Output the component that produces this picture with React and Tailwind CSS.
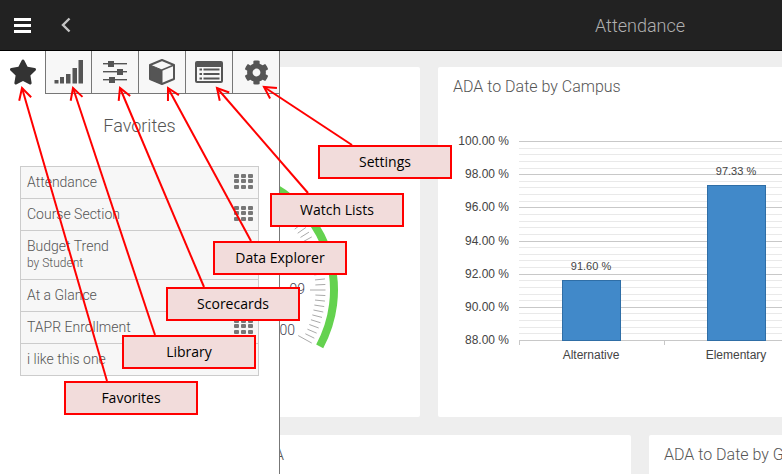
import React from "react";
import { FaStar, FaCog } from "react-icons/fa";

const favorites = [
  { name: "Attendance" },
  { name: "Course Section" },
  { name: "Budget Trend", sub: "by Student" },
  { name: "At a Glance" },
  { name: "TAPR Enrollment" },
  { name: "i like this one" },
];

const callouts = [
  { label: "Settings", className: "left-[318px] top-[145px]", from: [352, 145], to: [264, 87] },
  { label: "Watch Lists", className: "left-[270px] top-[193px]", from: [308, 193], to: [217, 88] },
  { label: "Data Explorer", className: "left-[213px] top-[241px]", from: [251, 241], to: [168, 88] },
  { label: "Scorecards", className: "left-[166px] top-[287px]", from: [204, 287], to: [120, 88] },
  { label: "Library", className: "left-[122px] top-[335px]", from: [155, 335], to: [73, 88] },
  { label: "Favorites", className: "left-[64px] top-[381px]", from: [107, 381], to: [22, 88] },
];

const GridIcon = () => (
  <div className="grid grid-cols-3 gap-[1.5px] w-[19px] h-[15px] mb-[3px] shrink-0">
    {Array.from({ length: 9 }).map((_, i) => (
      <div key={i} className="bg-[#777] rounded-[1px]" />
    ))}
  </div>
);

const BarsIcon = () => (
  <svg width="30" height="25" viewBox="54 60 30 25" fill="#555">
    <rect x="54.5" y="80" width="4" height="3.5" />
    <rect x="60" y="77" width="4" height="6.5" />
    <rect x="66" y="74" width="4.5" height="9.5" />
    <rect x="72.5" y="68" width="4.5" height="15.5" />
    <rect x="78.5" y="60" width="4.5" height="23.5" />
  </svg>
);

const SlidersIcon = () => (
  <svg width="26" height="24" viewBox="102 61 26 24" fill="#555">
    <rect x="103" y="64" width="24" height="1.4" />
    <rect x="103" y="72" width="24" height="1.4" />
    <rect x="103" y="80" width="24" height="1.4" />
    <rect x="108" y="62" width="6" height="6" />
    <rect x="117" y="70" width="6" height="6" />
    <rect x="109" y="78" width="6" height="6" />
  </svg>
);

const CubeIcon = () => (
  <svg width="28" height="28" viewBox="147 59 28 28">
    <path d="M161 61 L173 66 L173 80 L161 85 L149 80 L149 66 Z" fill="#f7f7f7" stroke="#555" strokeWidth="2" strokeLinejoin="round" />
    <path d="M149 66 L161 71 L161 85 L149 80 Z" fill="#555" stroke="#555" strokeWidth="1" />
    <path d="M161 71 L173 66" stroke="#555" strokeWidth="1.5" />
  </svg>
);

const ListIcon = () => (
  <svg width="28" height="23" viewBox="195 60 28 23">
    <rect x="195" y="60" width="28" height="22" rx="2" fill="#555" />
    <rect x="197" y="66" width="24" height="14" fill="#f7f7f7" />
    <g fill="#555">
      <rect x="199.5" y="67.5" width="2.5" height="2" />
      <rect x="203.5" y="67.5" width="16" height="2" />
      <rect x="199.5" y="72" width="2.5" height="2" />
      <rect x="203.5" y="72" width="16" height="2" />
      <rect x="199.5" y="76.5" width="2.5" height="2" />
      <rect x="203.5" y="76.5" width="16" height="2" />
    </g>
  </svg>
);

const Gauge = () => {
  const cx = 216;
  const cy = 290;
  const ticks = [];
  // ticks run around the arc, every tenth one is long
  for (let k = -20; k <= 10; k++) {
    const rad = (k * 2.9 * Math.PI) / 180;
    const major = k % 10 === 0;
    const r1 = major ? 94 : 99.5;
    ticks.push(
      <line
        key={k}
        x1={cx + r1 * Math.cos(rad)}
        y1={cy + r1 * Math.sin(rad)}
        x2={cx + 109.5 * Math.cos(rad)}
        y2={cy + 109.5 * Math.sin(rad)}
        stroke="#aaa"
        strokeWidth="1"
      />
    );
  }
  const start = (-60 * Math.PI) / 180;
  const end = (28.5 * Math.PI) / 180;
  return (
    <svg className="block" width="402" height="350" viewBox="18 67 402 350">
      <path
        d={`M${cx + 118 * Math.cos(start)} ${cy + 118 * Math.sin(start)} A118 118 0 0 1 ${cx + 118 * Math.cos(end)} ${cy + 118 * Math.sin(end)}`}
        fill="none"
        stroke="#64d24f"
        strokeWidth="8"
      />
      {ticks}
      <text x="305" y="294" textAnchor="end" fontSize="14" fontWeight="300" fill="#445" fontFamily="Roboto, sans-serif">.99</text>
      <text x="295" y="335" textAnchor="end" fontSize="14" fontWeight="300" fill="#445" fontFamily="Roboto, sans-serif">100</text>
    </svg>
  );
};

const BarChart = () => {
  const labels = ["100.00 %", "98.00 %", "96.00 %", "94.00 %", "92.00 %", "90.00 %", "88.00 %"];
  const top = 141;
  const step = 33.17;
  const minor = [];
  for (let i = 0; i < 6; i++) {
    for (let j = 1; j < 5; j++) {
      minor.push(Math.round(top + i * step + (j * step) / 5) + 0.5);
    }
  }
  return (
    <svg className="block" width="344" height="240" viewBox="438 130 344 240" fontFamily="'Liberation Sans', Arial, sans-serif">
      {minor.map((y) => (
        <line key={y} x1="519" x2="782" y1={y} y2={y} stroke="#e9e9e9" strokeWidth="1" />
      ))}
      {labels.map((label, i) => {
        const y = Math.round(top + i * step) + 0.5;
        return (
          <g key={label}>
            <line x1="519" x2="782" y1={y} y2={y} stroke="#c8c8c8" strokeWidth="1" />
            <text x="509" y={y + 3} textAnchor="end" fontSize="12" fill="#444">{label}</text>
          </g>
        );
      })}
      <line x1="519.5" x2="519.5" y1="340" y2="345" stroke="#c8c8c8" />
      <line x1="664.5" x2="664.5" y1="340" y2="345" stroke="#c8c8c8" />
      <rect x="562.5" y="280.5" width="58" height="60" fill="#4189c9" stroke="#2f6ea6" />
      <rect x="707.5" y="185.5" width="58" height="155" fill="#4189c9" stroke="#2f6ea6" />
      <text x="591" y="270" textAnchor="middle" fontSize="11" fill="#444">91.60 %</text>
      <text x="736" y="175" textAnchor="middle" fontSize="11" fill="#444">97.33 %</text>
      <text x="591" y="359" textAnchor="middle" fontSize="12" fill="#444">Alternative</text>
      <text x="736" y="359" textAnchor="middle" fontSize="12" fill="#444">Elementary</text>
    </svg>
  );
};

const Arrow = ({ from, to }) => {
  const angle = Math.atan2(from[1] - to[1], from[0] - to[0]);
  const head = (offset) => [
    to[0] + 13 * Math.cos(angle + offset),
    to[1] + 13 * Math.sin(angle + offset),
  ];
  const left = head(0.5);
  const right = head(-0.5);
  return (
    <g stroke="#ff0000" strokeWidth="2" fill="none">
      <line x1={from[0]} y1={from[1]} x2={to[0]} y2={to[1]} />
      <path d={`M${left[0]} ${left[1]} L${to[0]} ${to[1]} L${right[0]} ${right[1]}`} />
    </g>
  );
};

const App = () => {
  return (
    <div className="relative w-[782px] h-[474px] overflow-hidden bg-[#eeeeee] font-['Roboto',sans-serif]">
      {/* top bar */}
      <header className="flex items-center h-[51px] bg-[#222222] border-b border-black pl-[14px]">
        <div className="flex flex-col gap-[3px] w-[17px]">
          <div className="h-[3px] bg-white" />
          <div className="h-[3px] bg-white" />
          <div className="h-[3px] bg-white" />
        </div>
        <svg className="ml-[30px]" width="10" height="16" viewBox="0 0 10 16" fill="none" stroke="#c4c4c4" strokeWidth="2.4">
          <path d="M8.5 1.5 L2 8 L8.5 14.5" />
        </svg>
        <div className="ml-[524px] text-[18px] font-light text-[#b0b0b0]">Attendance</div>
      </header>

      {/* dashboard cards */}
      <main className="flex flex-col gap-[18px] pt-[16px] pl-[18px]">
        <div className="flex gap-[18px]">
          <div className="w-[402px] h-[350px] shrink-0 bg-white rounded-[2px]">
            <Gauge />
          </div>
          <div className="w-[402px] h-[350px] shrink-0 bg-white rounded-[2px]">
            <h3 className="pt-[10px] pl-[15px] h-[63px] text-[16px] leading-[20px] font-light text-[#555]">ADA to Date by Campus</h3>
            <BarChart />
          </div>
        </div>
        <div className="flex gap-[18px]">
          <div className="w-[613px] h-[60px] shrink-0 bg-white rounded-[2px] pt-[10px] pl-[15px] text-[16px] leading-[20px] font-light text-[#555]">
            <div className="text-right pr-[347px]">ADA</div>
          </div>
          <div className="w-[402px] h-[60px] shrink-0 bg-white rounded-[2px] pt-[10px] pl-[15px] text-[16px] leading-[20px] font-light text-[#555]">
            ADA to Date by Grade
          </div>
        </div>
      </main>

      {/* favorites panel */}
      <aside className="absolute left-0 top-[51px] bottom-0 w-[280px] bg-white border-r border-[#777]">
        <div className="flex h-[43px]">
          <div className="w-[45px] flex items-center justify-center pb-[2px] text-[#333]">
            <FaStar size={28} />
          </div>
          <div className="w-[46px] flex items-center justify-center bg-[#f7f7f7] border-l border-b border-[#777]"><BarsIcon /></div>
          <div className="w-[47px] flex items-center justify-center bg-[#f7f7f7] border-l border-b border-[#777]"><SlidersIcon /></div>
          <div className="w-[47px] flex items-center justify-center bg-[#f7f7f7] border-l border-b border-[#777]"><CubeIcon /></div>
          <div className="w-[47px] flex items-center justify-center bg-[#f7f7f7] border-l border-b border-[#777]"><ListIcon /></div>
          <div className="w-[47px] flex items-center justify-center bg-[#f7f7f7] border-l border-b border-[#777] text-[#555]">
            <FaCog size={25} />
          </div>
        </div>
        <h2 className="mt-[21px] text-center text-[18px] leading-[22px] font-light text-[#555]">Favorites</h2>
        <ul className="mt-[29px] ml-[20px] w-[239px] border border-[#ccc] border-b-0">
          {favorites.map((item) => (
            <li key={item.name} className="flex items-center justify-between bg-[#f7f7f7] border-b border-[#ccc] pl-[6px] pr-[5px] min-h-[32px] font-light text-[#555]">
              <div className={item.sub ? "pt-[6px] pb-[8px]" : "pb-[1px]"}>
                <div className="text-[14px] leading-[18px]">{item.name}</div>
                {item.sub && <div className="text-[12px] leading-[16px]">{item.sub}</div>}
              </div>
              <GridIcon />
            </li>
          ))}
        </ul>
      </aside>

      {/* annotations */}
      <svg className="absolute left-0 top-0 pointer-events-none" width="782" height="474">
        {callouts.map((c) => (
          <Arrow key={c.label} from={c.from} to={c.to} />
        ))}
      </svg>
      {callouts.map((c) => (
        <div
          key={c.label}
          className={`absolute ${c.className} w-[134px] h-[34px] flex items-center justify-center pb-[2px] bg-[#f2dcdb] border-2 border-[#ff0000] text-[14px] text-black font-['Open_Sans',sans-serif]`}
        >
          {c.label}
        </div>
      ))}
    </div>
  );
};

export default App;
